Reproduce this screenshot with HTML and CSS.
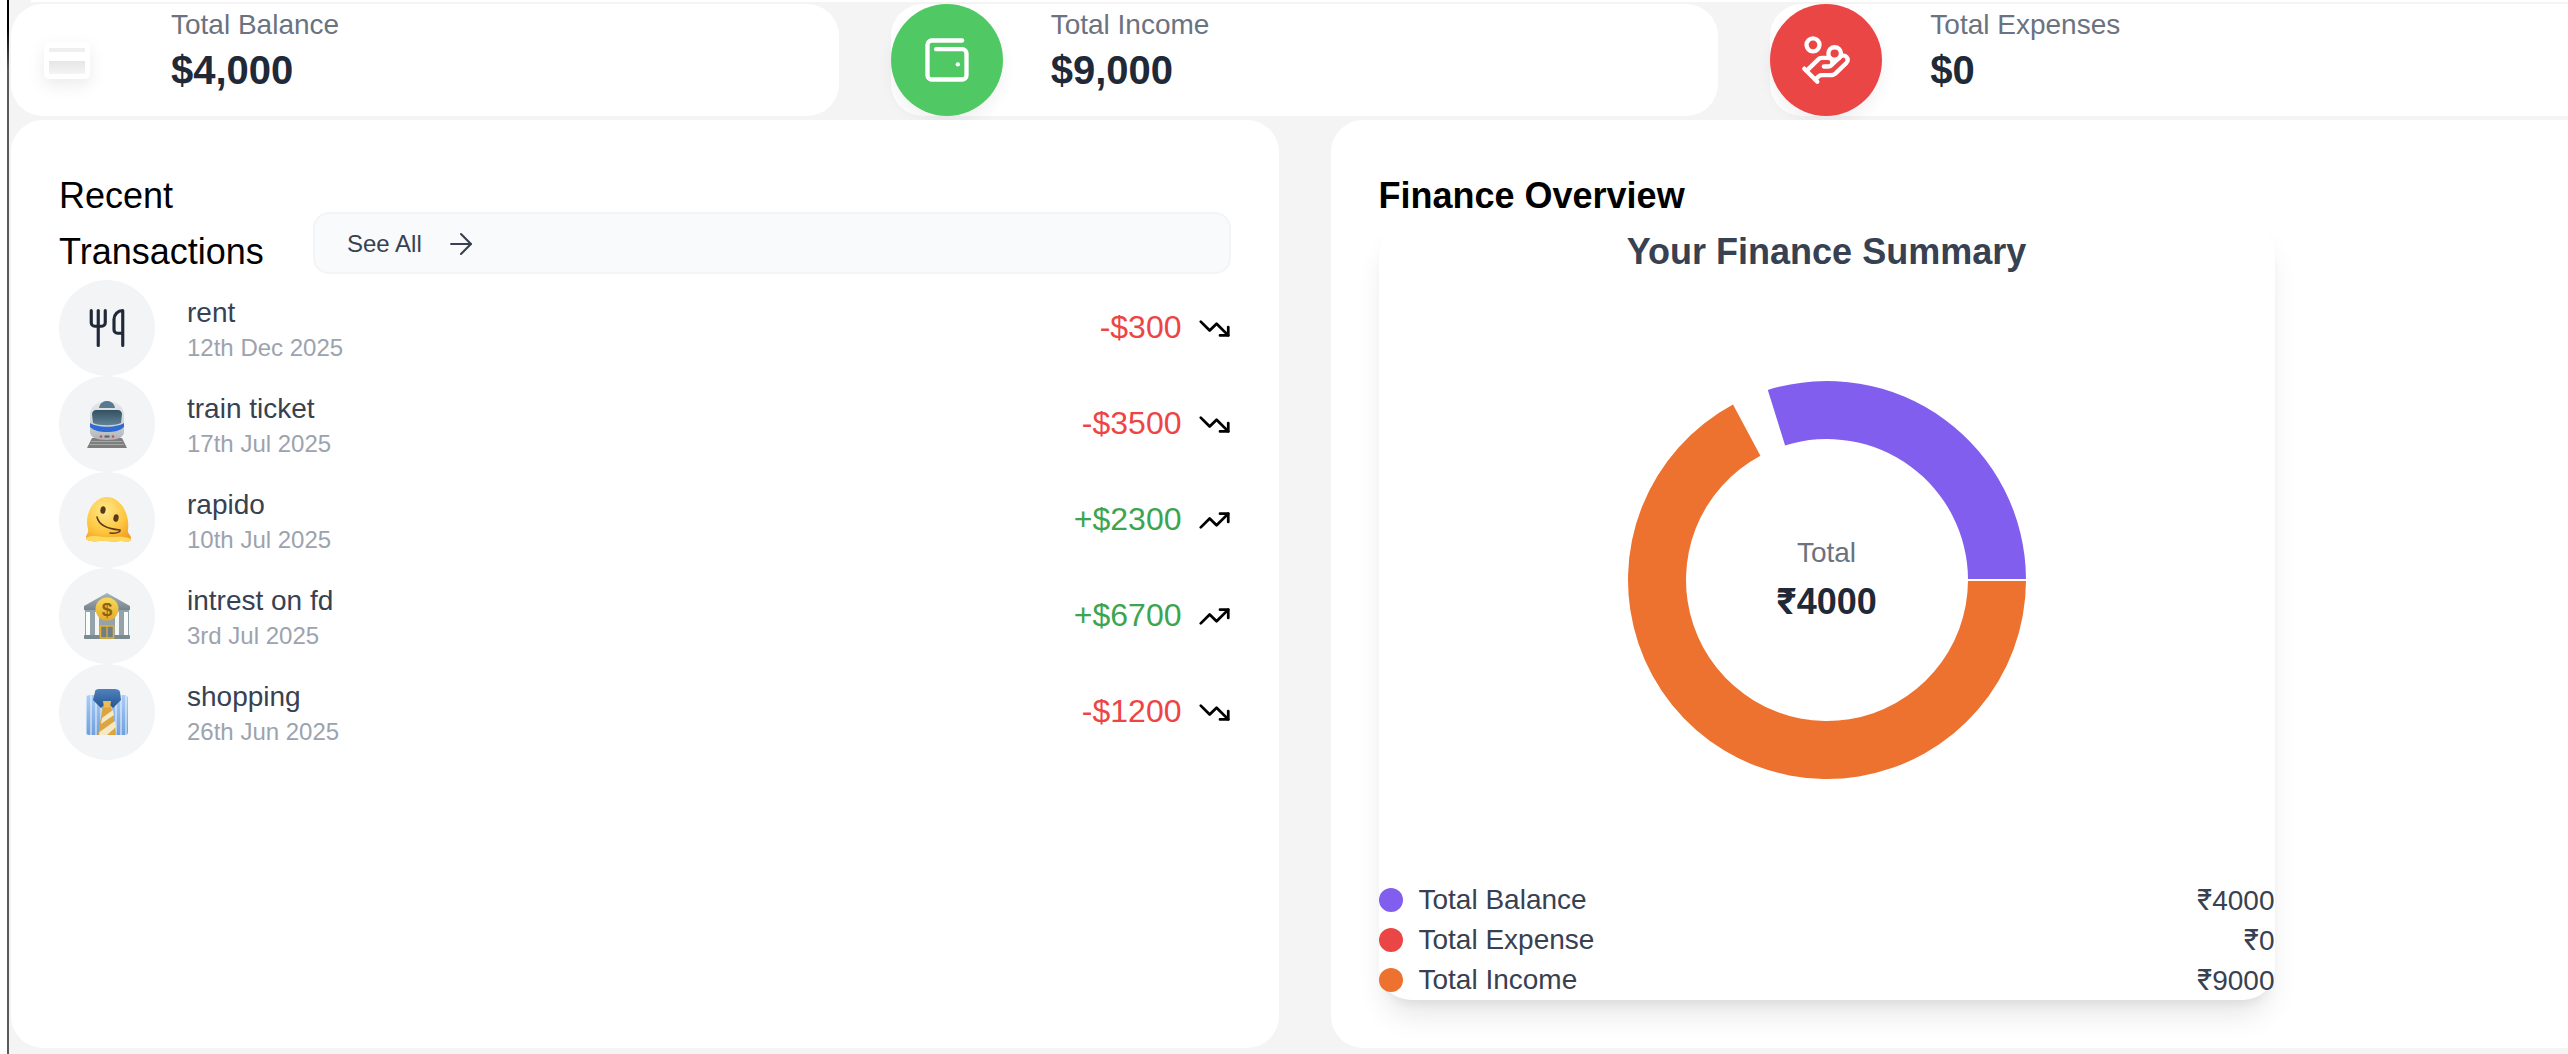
FILE: index.html
```html
<!DOCTYPE html>
<html lang="en">
<head>
<meta charset="utf-8">
<title>Dashboard</title>
<link rel="stylesheet" href="styles.css">
</head>
<body>
<div class="frame">
  <div class="prev-sliver"></div>
  <main class="content">
    <section class="stats">
      <article class="stat">
        <div class="stat-icon white">
          <svg width="46" height="37" viewBox="0 0 46 37"><defs><linearGradient id="cardBand" x1="0" y1="0" x2="0" y2="1"><stop offset="0" stop-color="#e6e6e6"/><stop offset="1" stop-color="#f4f4f4"/></linearGradient></defs><rect width="46" height="37" rx="5" fill="#fff"/><rect x="5" y="6" width="36" height="4" fill="#efefef"/><rect x="5" y="19" width="36" height="13" fill="url(#cardBand)"/></svg>
        </div>
        <div class="stat-text"><p class="stat-label">Total Balance</p><p class="stat-value">$4,000</p></div>
      </article>
      <article class="stat">
        <div class="stat-icon green">
          <svg width="52" height="52" viewBox="0 0 24 24" fill="none" stroke="#fff" stroke-width="2" stroke-linecap="round" stroke-linejoin="round"><path d="M17 14h.01"/><path d="M7 7h12a2 2 0 0 1 2 2v10a2 2 0 0 1-2 2H5a2 2 0 0 1-2-2V5a2 2 0 0 1 2-2h14"/></svg>
        </div>
        <div class="stat-text"><p class="stat-label">Total Income</p><p class="stat-value">$9,000</p></div>
      </article>
      <article class="stat">
        <div class="stat-icon red">
          <svg width="52" height="52" viewBox="0 0 24 24" fill="none" stroke="#fff" stroke-width="2" stroke-linecap="round" stroke-linejoin="round"><path d="M11 15h2a2 2 0 1 0 0-4h-3c-.6 0-1.100.2-1.400.6L3 17"/><path d="m7 21 1.600-1.400c.3-.4.8-.6 1.400-.6h4c1.100 0 2.100-.4 2.800-1.200l4.600-4.400a2 2 0 0 0-2.750-2.910l-4.200 3.900"/><path d="m2 16 6 6"/><circle cx="16" cy="9" r="2.900"/><circle cx="6" cy="5" r="3"/></svg>
        </div>
        <div class="stat-text"><p class="stat-label">Total Expenses</p><p class="stat-value">$0</p></div>
      </article>
    </section>

    <section class="panels">
      <article class="panel">
        <header class="panel-head">
          <h5 class="panel-title">Recent Transactions</h5>
          <button class="see-all" type="button">See All
            <svg width="34" height="34" viewBox="0 0 24 24" fill="none" stroke="#374151" stroke-width="1.500" stroke-linecap="round" stroke-linejoin="round"><path d="M5 12h14"/><path d="m12 5 7 7-7 7"/></svg>
          </button>
        </header>
        <ul class="tx-list">
          <li class="tx">
            <div class="tx-icon"><svg width="42" height="42" viewBox="0 0 24 24" fill="none" stroke="#1f2937" stroke-width="1.800" stroke-linecap="round" stroke-linejoin="round"><path d="M3 2v7c0 1.100.9 2 2 2h4a2 2 0 0 0 2-2V2"/><path d="M7 2v20"/><path d="M21 15V2a5 5 0 0 0-5 5v6c0 1.100.9 2 2 2h3Zm0 0v7"/></svg></div>
            <div class="tx-text"><p class="tx-name">rent</p><p class="tx-date">12th Dec 2025</p></div>
            <div class="tx-amount neg">-$300</div>
            <svg class="trend" width="33" height="33" viewBox="0 0 24 24"><path d="M22 17 13.500 8.500l-5 5L2 7"/><path d="M16 17h6v-6"/></svg>
          </li>
          <li class="tx">
            <div class="tx-icon"><svg width="40" height="48" viewBox="0 0 40 48"><defs><linearGradient id="trainBody" x1="0" y1="0" x2="0" y2="1"><stop offset="0" stop-color="#e6e8eb"/><stop offset=".6" stop-color="#cfd2d6"/><stop offset="1" stop-color="#aeb1b5"/></linearGradient><linearGradient id="trainGlass" x1="0" y1="0" x2="0" y2="1"><stop offset="0" stop-color="#33505f"/><stop offset="1" stop-color="#5f8396"/></linearGradient></defs><path d="M5 38H35L40 48H0Z" fill="#7d7d7d"/><path d="M3 44.500H37M4.500 41.500H35.500" stroke="#a8a8a8" stroke-width="1.200"/><path d="M3 15C3 6 11 1 20 1S37 6 37 15V32C37 37 31 40 20 40S3 37 3 32Z" fill="url(#trainBody)"/><path d="M12 8C13 3 16 1 20 1S27 3 28 8Z" fill="#58798f"/><path d="M5 14C5 12 7 10 9 10H31C33 10 35 12 35 14L34 23C28 26 12 26 6 23Z" fill="url(#trainGlass)"/><path d="M3 23C11 28 29 28 37 23V27C33 31 27 32 20 32S7 31 3 27Z" fill="#2f6ad6"/><circle cx="14" cy="36.500" r="1.300" fill="#c4553f"/><circle cx="26" cy="36.500" r="1.300" fill="#c4553f"/><rect x="17.500" y="35.500" width="5" height="2" fill="#5f5f5f"/></svg></div>
            <div class="tx-text"><p class="tx-name">train ticket</p><p class="tx-date">17th Jul 2025</p></div>
            <div class="tx-amount neg">-$3500</div>
            <svg class="trend" width="33" height="33" viewBox="0 0 24 24"><path d="M22 17 13.500 8.500l-5 5L2 7"/><path d="M16 17h6v-6"/></svg>
          </li>
          <li class="tx">
            <div class="tx-icon"><svg width="47" height="46" viewBox="0 0 47 46"><defs><radialGradient id="melt" cx=".42" cy=".3" r=".8"><stop offset="0" stop-color="#ffe88a"/><stop offset=".6" stop-color="#fdc63f"/><stop offset="1" stop-color="#f29a1f"/></radialGradient></defs><path d="M2 41C2 37 5 37 4 32C0 18 9 0 23 0S46 18 44 32C43 37 47 37 47 42C47 46 40 44 36 44C29 46 24 43 15 44C9 45 2 44 2 41Z" fill="url(#melt)"/><path d="M2 41C6 38 12 39 20 40S38 38 47 42C47 46 40 44 36 44C29 46 24 43 15 44C9 45 2 44 2 41Z" fill="#ffd95e"/><ellipse cx="19" cy="13" rx="2.600" ry="3.800" transform="rotate(10 19 13)" fill="#5b3a1c"/><ellipse cx="32" cy="21" rx="2.600" ry="3.800" transform="rotate(10 32 21)" fill="#5b3a1c"/><path d="M13 20C15 29 24 32 36 33C37 35 31 37 26 36" fill="none" stroke="#5b3a1c" stroke-width="1.500" stroke-linecap="round"/></svg></div>
            <div class="tx-text"><p class="tx-name">rapido</p><p class="tx-date">10th Jul 2025</p></div>
            <div class="tx-amount pos">+$2300</div>
            <svg class="trend" width="33" height="33" viewBox="0 0 24 24"><path d="M22 7 13.500 15.500l-5-5L2 17"/><path d="M16 7h6v6"/></svg>
          </li>
          <li class="tx">
            <div class="tx-icon"><svg width="48" height="48" viewBox="0 0 48 48"><defs><linearGradient id="bankRoof" x1="0" y1="0" x2="0" y2="1"><stop offset="0" stop-color="#a9b5bb"/><stop offset="1" stop-color="#75848c"/></linearGradient><linearGradient id="bankCoin" x1="0" y1="0" x2="0" y2="1"><stop offset="0" stop-color="#fbd95c"/><stop offset="1" stop-color="#e6ab27"/></linearGradient></defs><path d="M24 1 47 14V18H1V14Z" fill="url(#bankRoof)"/><rect x="2" y="18" width="44" height="26" fill="#94a3aa"/><rect x="1" y="43" width="46" height="4" rx="1" fill="#7b8a91"/><rect x="3" y="20" width="4" height="23" fill="#fbfcfc"/><rect x="12" y="20" width="4" height="23" fill="#f4f6f6"/><rect x="32" y="20" width="4" height="23" fill="#f4f6f6"/><rect x="41" y="20" width="4" height="23" fill="#fbfcfc"/><rect x="17.500" y="34" width="13" height="12" fill="#6f7f87" stroke="#e5b02c" stroke-width="1.500"/><path d="M24 34V46" stroke="#e5b02c" stroke-width="1.200"/><circle cx="24" cy="17" r="11.500" fill="url(#bankCoin)"/><text class="bank-dollar" x="24" y="23.500" text-anchor="middle">$</text></svg></div>
            <div class="tx-text"><p class="tx-name">intrest on fd</p><p class="tx-date">3rd Jul 2025</p></div>
            <div class="tx-amount pos">+$6700</div>
            <svg class="trend" width="33" height="33" viewBox="0 0 24 24"><path d="M22 7 13.500 15.500l-5-5L2 17"/><path d="M16 7h6v6"/></svg>
          </li>
          <li class="tx">
            <div class="tx-icon"><svg width="44" height="46" viewBox="0 0 44 46"><defs><linearGradient id="shirt" x1="0" y1="0" x2="0" y2="1"><stop offset="0" stop-color="#a9cdf6"/><stop offset="1" stop-color="#6f9fdc"/></linearGradient><linearGradient id="collar" x1="0" y1="0" x2="0" y2="1"><stop offset="0" stop-color="#4f82bd"/><stop offset="1" stop-color="#26558f"/></linearGradient><pattern id="stripes" width="5" height="6" patternUnits="userSpaceOnUse"><rect width="2" height="6" fill="#fff" opacity=".45"/></pattern></defs><path d="M1 9C1 7 3 6 5 6H39C41 6 43 7 43 9V43C43 45 42 46 40 46H4C2 46 1 45 1 43Z" fill="url(#shirt)"/><path d="M1 9C1 7 3 6 5 6H39C41 6 43 7 43 9V43C43 45 42 46 40 46H4C2 46 1 45 1 43Z" fill="url(#stripes)"/><path d="M18 16H26L31 46H13Z" fill="#dba63f"/><path d="M17 29 28 21 29 26 16 35ZM14.500 43 30 32 31 38 22 46H14Z" fill="#f5e8c6"/><path d="M10 3C10 0 13 0 16 0H28C31 0 34 0 35 3L36 11 28 19 22 13 16 19 8 11Z" fill="url(#collar)"/><path d="M18 12H26L25 18.500H19Z" fill="#e9bd5c"/></svg></div>
            <div class="tx-text"><p class="tx-name">shopping</p><p class="tx-date">26th Jun 2025</p></div>
            <div class="tx-amount neg">-$1200</div>
            <svg class="trend" width="33" height="33" viewBox="0 0 24 24"><path d="M22 17 13.500 8.500l-5 5L2 7"/><path d="M16 17h6v-6"/></svg>
          </li>
        </ul>
      </article>

      <article class="panel">
        <h5 class="panel-title strong">Finance Overview</h5>
        <div class="chart-card">
          <h2 class="chart-title">Your Finance Summary</h2>
          <div class="donut">
            <svg width="400" height="400" viewBox="-200 -200 400 400">
              <path d="M199 -1A199 199 0 0 0 -59.200 -190L-41.900 -134.600A141 141 0 0 1 141 -1Z" fill="#825eee"/>
              <path d="M-94 -175.400A199 199 0 1 0 199 1L141 1A141 141 0 1 1 -66.600 -124.300Z" fill="#ee722f"/>
            </svg>
            <div class="donut-center"><p class="donut-label">Total</p><p class="donut-value"><span class="rupee">₹</span>4000</p></div>
          </div>
          <ul class="legend">
            <li class="legend-row"><span class="dot purple"></span><span class="legend-name">Total Balance</span><span><span class="rupee">₹</span>4000</span></li>
            <li class="legend-row"><span class="dot rose"></span><span class="legend-name">Total Expense</span><span><span class="rupee">₹</span>0</span></li>
            <li class="legend-row"><span class="dot orange"></span><span class="legend-name">Total Income</span><span><span class="rupee">₹</span>9000</span></li>
          </ul>
        </div>
      </article>
    </section>
  </main>
</div>
</body>
</html>
```

FILE: styles.css
```css
* { box-sizing: border-box; }
html, body { margin: 0; padding: 0; height: 100%; overflow: hidden; background: #fff; }
body { font-family: "Liberation Sans", Arial, sans-serif; color: #1f2937; }
p, h2, h5, ul { margin: 0; padding: 0; }
ul { list-style: none; }

.frame {
  height: 1054px;
  width: 2568px;
  margin-left: 7px;
  border-left: 2px solid #5a5a5a;
  border-image: linear-gradient(#000 0, #000 30px, #5a5a5a 70px) 1;
  background: #f4f4f5;
  overflow: hidden;
}
.prev-sliver { height: 2px; margin-left: 22px; background: #fff; }
.content { width: 2587px; margin-left: 2px; padding-top: 2px; }

.stats { display: grid; grid-template-columns: repeat(3, 1fr); column-gap: 52px; }
.stat {
  display: flex;
  align-items: flex-start;
  gap: 48px;
  height: 112px;
  background: #fff;
  border-radius: 32px;
}
.stat-icon {
  flex: none;
  width: 112px;
  height: 112px;
  border-radius: 50%;
  display: flex;
  align-items: center;
  justify-content: center;
  box-shadow: 0 8px 16px rgba(0, 0, 0, .06);
}
.stat-icon.white { background: #fff; box-shadow: none; }
.stat-icon.white svg { filter: drop-shadow(0 6px 8px rgba(0, 0, 0, .08)); }
.stat-icon.green { background: #50c864; }
.stat-icon.red { background: #ea4646; }
.stat-label { font-size: 28px; line-height: 40px; color: #6b7280; height: 40px; padding-top: 1px; }
.stat-value { font-size: 40px; line-height: 52px; font-weight: 700; color: #1f2937; }

.panels { display: grid; grid-template-columns: repeat(2, 1fr); column-gap: 52px; margin-top: 4px; }
.panel {
  height: 928px;
  background: #fff;
  border-radius: 32px;
  padding: 48px;
}
.panel-head { display: flex; justify-content: space-between; align-items: flex-start; gap: 48px; }
.panel-title { font-size: 36px; line-height: 56px; font-weight: 400; color: #000; width: 206px; flex: none; }
.panel-title.strong { font-weight: 700; width: auto; }

.see-all {
  flex: 1;
  margin-top: 44px;
  height: 62px;
  display: flex;
  align-items: center;
  gap: 22px;
  padding: 2px 32px 0;
  font: 24px/32px "Liberation Sans", Arial, sans-serif;
  color: #374151;
  background: #f9fafb;
  border: 2px solid #f3f4f6;
  border-radius: 16px;
}

.tx { display: flex; align-items: center; height: 96px; }
.tx-icon {
  flex: none;
  width: 96px;
  height: 96px;
  border-radius: 50%;
  background: #f3f4f6;
  display: flex;
  align-items: center;
  justify-content: center;
}
.tx-text { flex: 1; margin-left: 32px; }
.tx-name { font-size: 28px; line-height: 42px; margin-bottom: -2px; color: #374151; }
.tx-date { font-size: 24px; line-height: 32px; color: #9ca3af; }
.tx-amount { font-size: 32px; line-height: 40px; margin-right: 16px; margin-bottom: 3px; }
.tx-amount.neg { color: #ef4444; }
.tx-amount.pos { color: #3ba550; }
.trend { flex: none; fill: none; stroke: #000; stroke-width: 2; stroke-linecap: round; stroke-linejoin: round; }
.bank-dollar { font: 700 19px "Liberation Sans", Arial, sans-serif; fill: #8a6410; }

.chart-card {
  width: 896px;
  height: 778px;
  margin-top: -2px;
  padding-top: 2px;
  background: #fff;
  border-radius: 32px;
  box-shadow: 0 20px 30px -6px rgba(0, 0, 0, .1), 0 8px 12px -6px rgba(0, 0, 0, .08);
  display: flex;
  flex-direction: column;
}
.chart-title { font-size: 36px; line-height: 56px; font-weight: 700; color: #374151; text-align: center; }
.donut { position: relative; width: 400px; height: 400px; margin: 100px auto 0; }
.donut svg { display: block; }
.donut-center { position: absolute; left: 0; right: 0; top: 151px; text-align: center; }
.donut-label { font-size: 28px; line-height: 44px; color: #6b7280; }
.donut-value { font-size: 36px; line-height: 52px; font-weight: 700; color: #1f2937; }
.rupee { font-family: Inter, "Liberation Sans", sans-serif; }

.legend { margin-top: auto; }
.legend-row { display: flex; align-items: center; height: 40px; font-size: 28px; color: #374151; }
.legend-name { flex: 1; margin-left: 16px; }
.dot { width: 24px; height: 24px; border-radius: 50%; flex: none; }
.dot.purple { background: #825eee; }
.dot.rose { background: #ea4646; }
.dot.orange { background: #ee722f; }
```
